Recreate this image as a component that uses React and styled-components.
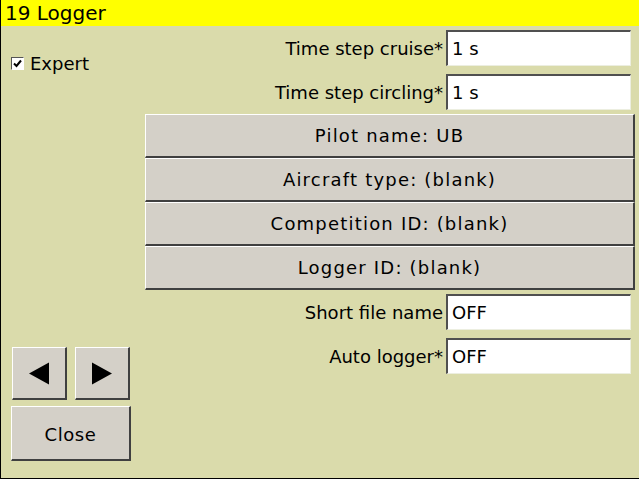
import React from "react";
import styled, { createGlobalStyle } from "styled-components";

const GlobalStyle = createGlobalStyle`
  html, body { margin: 0; padding: 0; background: #dadbab; }
  body { font-family: "DejaVu Sans", "Liberation Sans", sans-serif; color: #000; }
  * { box-sizing: border-box; }
`;

const Window = styled.div`
  width: 639px;
  height: 479px;
  display: flex;
  flex-direction: column;
  background: #dadbab;
  border-left: 1px solid #000;
  border-bottom: 1px solid #000;
  overflow: hidden;
`;

const TitleBar = styled.div`
  height: 26px;
  flex: none;
  background: #ffff00;
  font-size: 20px;
  line-height: 26px;
  padding-left: 4px;
  white-space: nowrap;
`;

const Body = styled.div`
  flex: 1;
  display: flex;
`;

const LeftCol = styled.div`
  width: 144px;
  flex: none;
  display: flex;
  flex-direction: column;
  padding: 29px 0 17px 10px;
`;

const CheckRow = styled.label`
  display: flex;
  align-items: center;
  gap: 6px;
  font-size: 18px;
  height: 16px;
`;

const CheckBox = styled.span`
  width: 13px;
  height: 13px;
  flex: none;
  background: #fff;
  border-top: 1px solid #555;
  border-left: 1px solid #555;
  border-right: 1px solid #fff;
  border-bottom: 1px solid #fff;
  display: flex;
  align-items: center;
  justify-content: center;
`;

const Spacer = styled.div`
  flex: 1;
`;

const NavRow = styled.div`
  display: flex;
  gap: 8px;
  padding-left: 1px;
  margin-bottom: 6px;
`;

const RaisedButton = styled.button`
  font-family: inherit;
  color: #000;
  background: #d4d0c8;
  border: none;
  border-top: 1px solid #fff;
  border-left: 1px solid #fff;
  border-right: 2px solid #404040;
  border-bottom: 2px solid #404040;
  padding: 0;
  margin: 0;
  display: flex;
  align-items: center;
  justify-content: center;
  cursor: pointer;
`;

const ArrowButton = styled(RaisedButton)`
  width: 55px;
  height: 53px;
`;

const CloseButton = styled(RaisedButton)`
  width: 120px;
  height: 55px;
  font-size: 18px;
  letter-spacing: 0.6px;
  padding-top: 3px;
`;

const RightCol = styled.div`
  flex: 1;
  display: flex;
  flex-direction: column;
  padding-right: 4px;
`;

const FieldRow = styled.div`
  height: 44px;
  display: flex;
  align-items: center;
  justify-content: flex-end;
  padding-right: 4px;
`;

const Label = styled.span`
  font-size: 18px;
  margin-right: 3px;
  white-space: nowrap;
`;

const EditBox = styled.div`
  width: 185px;
  height: 36px;
  background: #fff;
  border-top: 2px solid #505050;
  border-left: 2px solid #505050;
  border-right: 1px solid #eceee0;
  border-bottom: 1px solid #eceee0;
  font-size: 18px;
  display: flex;
  align-items: center;
  padding-left: 4px;
  white-space: nowrap;
`;

const WideButton = styled(RaisedButton)`
  width: 100%;
  height: 44px;
  font-size: 18px;
  letter-spacing: 1.2px;
`;

const Triangle = ({ dir }) => (
  <svg width="22" height="23" viewBox="0 0 22 23">
    {dir === "left" ? (
      <polygon points="1,11.5 21,0.5 21,22.5" fill="#000" />
    ) : (
      <polygon points="21,11.5 1,0.5 1,22.5" fill="#000" />
    )}
  </svg>
);

const fieldsTop = [
  { label: "Time step cruise*", value: "1 s" },
  { label: "Time step circling*", value: "1 s" },
];
const buttons = [
  "Pilot name: UB",
  "Aircraft type: (blank)",
  "Competition ID: (blank)",
  "Logger ID: (blank)",
];
const fieldsBottom = [
  { label: "Short file name", value: "OFF" },
  { label: "Auto logger*", value: "OFF" },
];

export default function App() {
  return (
    <>
      <GlobalStyle />
      <Window>
        <TitleBar>19 Logger</TitleBar>
        <Body>
          <LeftCol>
            <CheckRow>
              <CheckBox>
                <svg width="9" height="9" viewBox="0 0 9 9">
                  <path d="M1 4.5 L3.5 7 L8 1.5" stroke="#000" strokeWidth="2" fill="none" />
                </svg>
              </CheckBox>
              Expert
            </CheckRow>
            <Spacer />
            <NavRow>
              <ArrowButton aria-label="Previous">
                <Triangle dir="left" />
              </ArrowButton>
              <ArrowButton aria-label="Next">
                <Triangle dir="right" />
              </ArrowButton>
            </NavRow>
            <CloseButton>Close</CloseButton>
          </LeftCol>
          <RightCol>
            {fieldsTop.map((f) => (
              <FieldRow key={f.label}>
                <Label>{f.label}</Label>
                <EditBox>{f.value}</EditBox>
              </FieldRow>
            ))}
            {buttons.map((b) => (
              <WideButton key={b}>{b}</WideButton>
            ))}
            {fieldsBottom.map((f) => (
              <FieldRow key={f.label}>
                <Label>{f.label}</Label>
                <EditBox>{f.value}</EditBox>
              </FieldRow>
            ))}
          </RightCol>
        </Body>
      </Window>
    </>
  );
}
